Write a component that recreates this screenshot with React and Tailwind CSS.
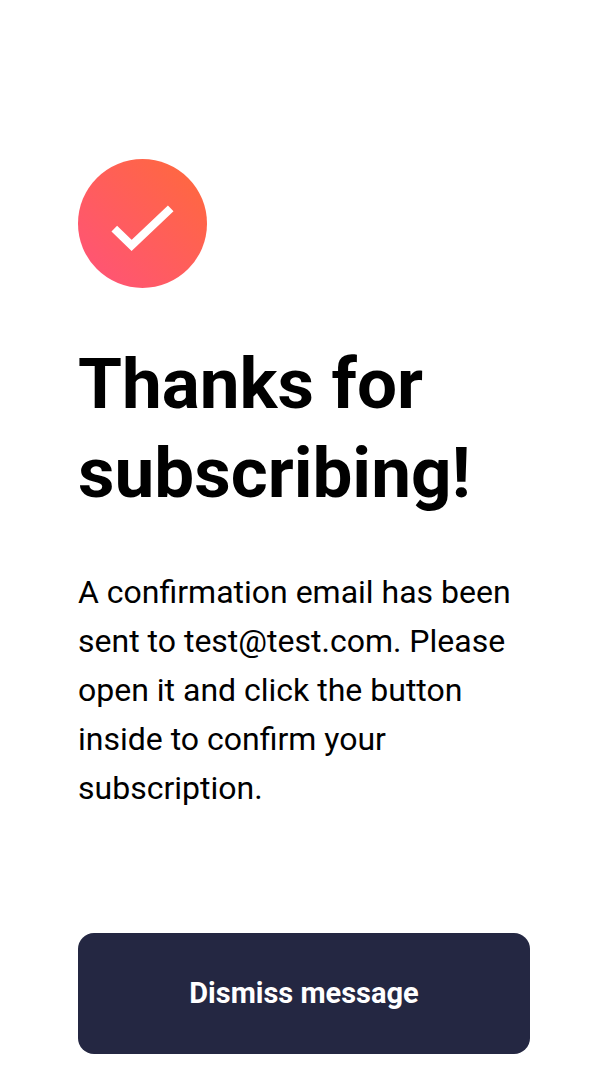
export default function App() {
  return (
    <main className="flex min-h-screen flex-col bg-white px-[78px] pt-[159px] pb-[27px] font-['Roboto',sans-serif] text-black">
      <svg className="size-[129px]" viewBox="0 0 64 64" aria-hidden="true">
        <defs>
          <linearGradient id="badge" x1="100%" x2="0%" y1="0%" y2="100%">
            <stop offset="0%" stopColor="#FF6A3A" />
            <stop offset="100%" stopColor="#FF527B" />
          </linearGradient>
        </defs>
        <circle cx="32" cy="32" r="32" fill="url(#badge)" />
        <path d="m18 34.5 8.6 8.4L46 24.5" fill="none" stroke="#fff" strokeWidth="4" />
      </svg>
      <h1 className="mt-[51px] text-[71px] leading-[89px] font-bold">Thanks for subscribing!</h1>
      <p className="mt-[51px] text-[32px] leading-[49px]">
        A confirmation email has been sent to test@test.com. Please open it and click the button inside to confirm your
        subscription.
      </p>
      <button type="button" className="mt-auto h-[121px] w-full rounded-2xl bg-[#242742] text-[29px] font-bold text-white">
        Dismiss message
      </button>
    </main>
  );
}
